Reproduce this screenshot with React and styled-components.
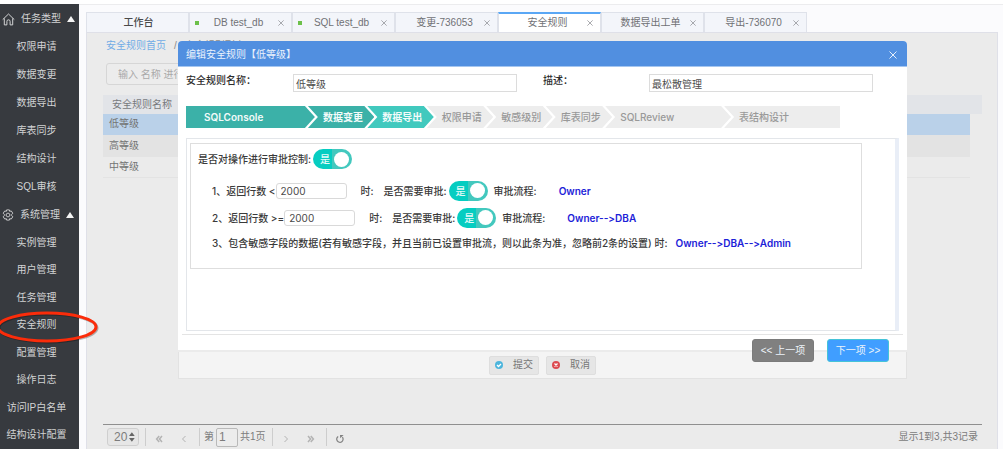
import React, { useState } from 'react';
import styled, { createGlobalStyle, css } from 'styled-components';

const GlobalStyle = createGlobalStyle`
  * {
    box-sizing: border-box;
  }

  body {
    margin: 0;
    background: #fbfbfd;
    font-family: 'Liberation Sans', 'Noto Sans CJK SC', sans-serif;
    font-size: 10px;
    line-height: 14px;
    color: #6e6e6e;
  }

  button,
  input,
  select {
    font: inherit;
    color: inherit;
  }

  ul,
  ol {
    margin: 0;
    padding: 0;
    list-style: none;
  }
`;

const Page = styled.div`
  min-height: 100vh;
  display: flex;
  border-top: 4px solid #fff;
  position: relative;
  overflow: hidden;
`;

/* ---------- sidebar ---------- */

const Sidebar = styled.nav`
  width: 79px;
  flex: none;
  display: flex;
  flex-direction: column;
  padding-top: 1px;
  background: #373a3f;
  color: #d2d3d4;
`;

const GroupTitle = styled.button`
  height: 28px;
  flex: none;
  display: flex;
  align-items: center;
  gap: 6px;
  padding: 0 0 0 2px;
  border: 0;
  background: none;
  white-space: nowrap;

  svg {
    flex: none;
  }
`;

const Menu = styled.ul`
  display: flex;
  flex-direction: column;
  flex: ${({ $fill }) => ($fill ? '1' : 'none')};
`;

const MenuItem = styled.li`
  flex: 1;
  min-height: ${({ $tall }) => ($tall ? 28 : 24)}px;
  display: flex;
  align-items: center;
  justify-content: center;
  padding-right: 6px;
  position: relative;
`;

const MenuLink = styled.a`
  color: inherit;
  text-decoration: none;
  white-space: nowrap;
`;

const Mark = styled.svg`
  position: absolute;
  left: -10px;
  top: -3px;
  width: 112px;
  height: 36px;
  z-index: 3;
  pointer-events: none;
`;

/* ---------- tabs and page ---------- */

const Main = styled.main`
  flex: 1;
  min-width: 0;
  display: flex;
  flex-direction: column;
  padding: 7px 5px 0 7px;
  border-top: 1px solid #ececee;
`;

const Tabs = styled.div`
  display: flex;
  flex: none;
`;

const Tab = styled.div`
  width: 103px;
  height: 20px;
  display: flex;
  align-items: center;
  padding: 0 7px 0 5px;
  background: #f3f5fa;
  border: 1px solid #dfe2ea;
  border-bottom: 0;

  ${({ $active }) =>
    $active &&
    css`
      background: #fff;
      border-top: 2px solid #5aa7f5;
    `}
`;

const TabDot = styled.span`
  width: 4px;
  height: 4px;
  flex: none;
  background: ${({ $on }) => ($on ? '#6cc04a' : 'transparent')};
`;

const TabName = styled.span`
  flex: 1;
  text-align: center;
  white-space: nowrap;
  color: ${({ $strong }) => ($strong ? '#4a4a4a' : '#707175')};
  font-weight: ${({ $strong }) => ($strong ? 500 : 400)};
`;

const CloseButton = styled.button`
  display: flex;
  padding: 0;
  border: 0;
  background: none;
  color: ${({ $light }) => ($light ? '#e6effb' : '#8d8f94')};
`;

const Panel = styled.section`
  flex: 1;
  display: flex;
  flex-direction: column;
  padding: 6px 15px 0 16px;
  background: #ebebeb;
  border: 1px solid #dfe0e8;
  border-bottom: 0;
`;

const Breadcrumb = styled.div`
  display: flex;
  gap: 8px;
  padding-left: 3px;
  color: #8a8a8a;

  a {
    color: #71abe6;
    text-decoration: none;
  }
`;

const Search = styled.input`
  width: 180px;
  height: 22px;
  margin: 10px 0 10px 3px;
  padding: 0 11px;
  border: 1px solid #d6d6d6;
  border-radius: 3px;
  background: #ececec;

  &::placeholder {
    color: #a9a9a9;
  }
`;

const TableWrap = styled.div`
  background: linear-gradient(#e2e4e8, #e2e4e8) no-repeat 0 0 / 100% 19px;
`;

const Table = styled.table`
  width: calc(100% - 12px);
  border-collapse: collapse;
  text-align: left;

  th {
    height: 19px;
    padding: 0 9px;
    font-weight: 400;
    color: #77797d;
  }

  td {
    height: 21px;
    padding: 0 6px;
    color: #747474;
    border-bottom: 1px solid #e3e3e3;
  }
`;

const Row = styled.tr`
  background: ${({ $tone }) => $tone};
`;

const Pager = styled.div`
  display: flex;
  align-items: center;
  height: 25px;
  margin-top: auto;
  padding: 0 4px;
  border-top: 1px solid #8f8f8f;
  color: #7c7c7c;
`;

const PageSize = styled.label`
  display: flex;
  align-items: center;
  width: 32px;
  height: 18px;
  padding: 0 3px 0 6px;
  border: 1px solid #cfcfcf;
  border-radius: 3px;
  background: #e6e6e6;
  font-size: 12px;

  select {
    width: 16px;
    padding: 0;
    border: 0;
    background: none;
    appearance: none;
  }
`;

const PagerGroup = styled.div`
  display: flex;
  align-items: center;
  gap: ${({ $gap }) => $gap}px;
  height: 18px;
  margin-left: 6px;
  padding-left: 4px;
  border-left: 1px solid #cdcdcd;
  white-space: nowrap;
`;

const PagerButton = styled.button`
  width: 18px;
  height: 18px;
  display: flex;
  align-items: flex-end;
  justify-content: center;
  padding: 0;
  border: 0;
  background: none;
  color: ${({ $dark }) => ($dark ? '#808080' : '#b3b3b3')};
`;

const PageInput = styled.input`
  width: 22px;
  height: 19px;
  padding: 0 2px;
  border: 1px solid #b9b9b9;
  border-radius: 2px;
  background: #ececec;
  font-size: 12px;
`;

const Total = styled.span`
  margin-left: auto;
`;

/* ---------- dialog ---------- */

const Overlay = styled.div`
  position: absolute;
  inset: 37px 96px auto 178px;
`;

const Dialog = styled.section`
  display: flex;
  flex-direction: column;
  border-radius: 4px 4px 3px 3px;
  background: #fff;
  color: #3a3a3a;
`;

const DialogHeader = styled.header`
  height: 26px;
  display: flex;
  align-items: center;
  justify-content: space-between;
  padding: 2px 10px 0 8px;
  border-bottom: 1px solid #a5c6f0;
  border-radius: 4px 4px 0 0;
  background: #518fe0;
  color: #eaf2fc;
`;

const Title = styled.h1`
  margin: 0;
  font-size: 10px;
  font-weight: 400;
`;

const DialogBody = styled.div`
  padding: 7px 4px 0;
  border-bottom: 2px solid #ebebeb;
`;

const Fields = styled.div`
  display: grid;
  grid-template-columns: 107px 1fr 132px 1fr;
  padding: 0 30px 0 4px;
`;

const FieldLabel = styled.label`
  font-weight: 500;
  color: #2c2c2c;
  padding-left: ${({ $inset }) => ($inset ? 26 : 0)}px;
`;

const FieldInput = styled.input`
  min-width: 0;
  height: 18px;
  padding: 0 2px;
  border: 1px solid #dcdcdc;
  background: #fff;
  color: #4c4c4c;
`;

const Steps = styled.ol`
  display: grid;
  grid-template-columns: 2fr repeat(5, 1fr) 2fr 2fr;
  margin: 14px 63px 0 4px;
  font-family: Inter, 'Noto Sans CJK SC', sans-serif;
`;

const stepColors = {
  done: '#3bb1a8',
  current: '#41c9be',
  todo: '#ededed',
};

const Step = styled.li`
  height: 22px;
  display: flex;
  align-items: center;
  margin-right: -10px;
  padding-left: 18px;
  background: ${({ $state }) => stepColors[$state]};
  color: ${({ $state }) => ($state === 'todo' ? '#999' : '#f2fbfa')};
  font-weight: ${({ $state }) => ($state === 'todo' ? 500 : 600)};
  white-space: nowrap;
  clip-path: polygon(
    3px 0,
    calc(100% - 10px) 0,
    100% 50%,
    calc(100% - 10px) 100%,
    3px 100%,
    13px 50%
  );

  &:first-child {
    clip-path: polygon(0 0, calc(100% - 10px) 0, 100% 50%, calc(100% - 10px) 100%, 0 100%);
  }

  &:last-child {
    margin-right: 0;
    clip-path: polygon(3px 0, 100% 0, 100% 100%, 3px 100%, 13px 50%);
  }
`;

const StepContent = styled.div`
  min-height: 193px;
  margin: 10px 4px 0;
  padding: 4px 33px 0 3px;
  border: 1px solid #e3e6ea;
  border-right: 4px solid #e9eef7;
`;

const RuleBox = styled.div`
  min-height: 126px;
  padding: 4px 7px 0;
  border: 1px solid #dedede;
  color: #3a3a3a;
  font-family: Inter, 'Noto Sans CJK SC', sans-serif;
  font-weight: 500;
  font-variant-ligatures: none;
  font-feature-settings: 'calt' 0;
`;

const Rule = styled.div`
  display: flex;
  align-items: center;
  height: ${({ $height }) => $height}px;
  padding-left: ${({ $nested }) => ($nested ? 14 : 0)}px;
  white-space: nowrap;
`;

const RuleList = styled.div`
  padding-top: 7px;
`;

const CountInput = styled.input`
  width: 71px;
  height: 16px;
  margin: 0 14px 0 0;
  padding: 0 4px;
  border: 1px solid #d9d9d9;
  border-radius: 3px;
  background: #fff;
  color: #4a4a4a;
  font-weight: 400;
`;

const Ask = styled.span`
  margin-left: 10px;
`;

const Toggle = styled.label`
  width: 39px;
  height: 20px;
  flex: none;
  display: flex;
  align-items: center;
  justify-content: space-between;
  margin: 0 6px 0 2px;
  padding: 0 3px 0 7px;
  border-radius: 10px;
  background: linear-gradient(90deg, #06cdc1 50%, #43c8be 50%);
  color: #e5fbf9;
  position: relative;

  input {
    position: absolute;
    inset: 0;
    margin: 0;
    opacity: 0;
  }
`;

const Knob = styled.span`
  width: 15px;
  height: 15px;
  border-radius: 50%;
  background: #fff;
`;

const Flow = styled.a`
  margin-left: ${({ $gap }) => $gap}px;
  color: #1c22d8;
  font-weight: 600;
  text-decoration: none;
`;

const StepActions = styled.div`
  display: flex;
  justify-content: flex-end;
  gap: 13px;
  height: 16px;
  margin-top: 3px;
  padding: 4px 14px 0;
  border-top: 1px solid #e4e4e4;
`;

const StepButton = styled.button`
  width: 62px;
  height: 23px;
  flex: none;
  padding: 0;
  border: 1px solid ${({ $primary }) => ($primary ? '#45c3d8' : '#7b7b7b')};
  border-radius: 3px;
  background: ${({ $primary }) => ($primary ? '#409eff' : '#808080')};
  color: #eef4fa;
  white-space: nowrap;
  position: relative;
`;

const DialogFooter = styled.footer`
  height: 27px;
  display: flex;
  align-items: center;
  justify-content: center;
  gap: 7px;
  border: 1px solid #e2e2e2;
  border-top: 0;
  background: #f4f4f4;
`;

const FooterButton = styled.button`
  width: 50px;
  height: 19px;
  display: flex;
  align-items: center;
  justify-content: space-between;
  padding: 0 5px;
  border: 1px solid #dedede;
  border-radius: 2px;
  background: #e6e6e6;
  color: #777;
`;

/* ---------- icons ---------- */

const HomeIcon = () => (
  <svg width="13" height="13" viewBox="0 0 13 13" fill="none" stroke="currentColor">
    <path d="M.7 6.6 6.5 1l5.8 5.6M2.3 5.4v6.5h2.6V8.4a1.6 1.6 0 0 1 3.2 0v3.5h2.6V5.4" />
  </svg>
);

const GearIcon = () => (
  <svg width="12" height="12" viewBox="0 0 12 12" fill="none" stroke="currentColor" strokeWidth=".9">
    <path d="M4.3 2.4 4.6.9h2.8l.3 1.5 1.5-.5 1.6 2.3L9.7 5.3v1.4l1.1 1.1-1.6 2.3-1.5-.5-.3 1.5H4.6l-.3-1.5-1.5.5-1.6-2.3 1.1-1.1V5.3L1.2 4.2l1.6-2.3z" />
    <path d="m6 4 1.8 1v2L6 8 4.2 7V5z" />
  </svg>
);

const Caret = () => (
  <svg width="8" height="6" viewBox="0 0 8 6" fill="#f4f4f4">
    <path d="M4 0l4 6H0z" />
  </svg>
);

const Cross = ({ size = 6 }) => (
  <svg width={size} height={size} viewBox="0 0 8 8" fill="none" stroke="currentColor">
    <path d="M.5.5l7 7M7.5.5l-7 7" />
  </svg>
);

const Arrows = () => (
  <svg width="6" height="10" viewBox="0 0 6 10" fill="#666">
    <path d="M3 0l3 4H0zM3 10l3-4H0z" />
  </svg>
);

const Chevron = ({ double, flip }) => (
  <svg
    width="8"
    height="14"
    viewBox="0 0 8 14"
    fill="none"
    stroke="currentColor"
    strokeWidth={double ? 1.5 : 1}
    transform={flip ? 'scale(-1 1)' : undefined}
  >
    <path d={double ? 'M4.2 4 1.6 7l2.6 3M7 4 4.4 7 7 10' : 'M5.5 4l-3 3 3 3'} />
  </svg>
);

const Refresh = () => (
  <svg width="10" height="14" viewBox="0 0 10 14" fill="none" stroke="currentColor">
    <path strokeWidth="1.2" d="M3.2 4.4A3.2 3.2 0 1 0 7.4 5.1" />
    <path fill="currentColor" stroke="none" d="M5 3h3.6L5.2 6.2z" />
  </svg>
);

const Badge = ({ color, path }) => (
  <svg width="8" height="8" viewBox="0 0 8 8" fill="none">
    <circle cx="4" cy="4" r="4" fill={color} />
    <path d={path} stroke="#fff" strokeWidth="1.3" />
  </svg>
);

/* ---------- data ---------- */

const taskMenu = ['权限申请', '数据变更', '数据导出', '库表同步', '结构设计', 'SQL审核'];

const systemMenu = [
  '实例管理',
  '用户管理',
  '任务管理',
  '安全规则',
  '配置管理',
  '操作日志',
  '访问IP白名单',
  '结构设计配置',
];

const tabs = [
  { name: '工作台', home: true },
  { name: 'DB test_db', dot: true },
  { name: 'SQL test_db', dot: true },
  { name: '变更-736053' },
  { name: '安全规则', active: true },
  { name: '数据导出工单' },
  { name: '导出-736070' },
];

const levels = [
  { name: '低等级', tone: '#bad1e9' },
  { name: '高等级', tone: '#e3e3e3' },
  { name: '中等级', tone: '#ebebeb' },
];

const steps = [
  ['SQLConsole', 'done'],
  ['数据变更', 'done'],
  ['数据导出', 'current'],
  ['权限申请', 'todo'],
  ['敏感级别', 'todo'],
  ['库表同步', 'todo'],
  ['SQLReview', 'todo'],
  ['表结构设计', 'todo'],
];

const rules = [
  { label: '1、返回行数 <', flow: 'Owner' },
  { label: '2、返回行数 >=', flow: 'Owner-->DBA' },
];

const Switch = ({ label }) => {
  const [on, setOn] = useState(true);

  return (
    <Toggle>
      <input
        type="checkbox"
        aria-label={label}
        checked={on}
        onChange={() => setOn(!on)}
      />
      {on ? '是' : '否'}
      <Knob />
    </Toggle>
  );
};

const SideMenu = () => (
  <Sidebar>
    <GroupTitle>
      <HomeIcon />
      任务类型
      <Caret />
    </GroupTitle>
    <Menu>
      {taskMenu.map((item) => (
        <MenuItem key={item} $tall>
          <MenuLink href="#">{item}</MenuLink>
        </MenuItem>
      ))}
    </Menu>
    <GroupTitle>
      <GearIcon />
      系统管理
      <Caret />
    </GroupTitle>
    <Menu $fill>
      {systemMenu.map((item) => (
        <MenuItem key={item}>
          <MenuLink href="#">{item}</MenuLink>
          {item === '安全规则' && (
            <Mark viewBox="0 0 112 36" fill="none">
              <ellipse cx="58" cy="19" rx="49" ry="14" stroke="#0004" strokeWidth="3" />
              <ellipse cx="57" cy="18" rx="49" ry="14" stroke="#fb2c0a" strokeWidth="3" />
            </Mark>
          )}
        </MenuItem>
      ))}
    </Menu>
  </Sidebar>
);

const RuleDialog = () => (
  <Overlay>
    <Dialog role="dialog" aria-label="编辑安全规则">
      <DialogHeader>
        <Title>编辑安全规则【低等级】</Title>
        <CloseButton $light aria-label="关闭">
          <Cross size={8} />
        </CloseButton>
      </DialogHeader>
      <DialogBody>
        <Fields>
          <FieldLabel htmlFor="rule-name">安全规则名称：</FieldLabel>
          <FieldInput id="rule-name" defaultValue="低等级" />
          <FieldLabel $inset htmlFor="rule-desc">
            描述：
          </FieldLabel>
          <FieldInput id="rule-desc" defaultValue="最松散管理" />
        </Fields>
        <Steps>
          {steps.map(([name, state]) => (
            <Step key={name} $state={state}>
              {name}
            </Step>
          ))}
        </Steps>
        <StepContent>
          <RuleBox>
            <Rule $height={22}>
              是否对操作进行审批控制:
              <Switch label="是否对操作进行审批控制" />
            </Rule>
            <RuleList>
              {rules.map(({ label, flow }) => (
                <Rule key={label} $height={27} $nested>
                  <label htmlFor={flow}>{label}</label>
                  <CountInput id={flow} defaultValue="2000" />
                  时:
                  <Ask>是否需要审批:</Ask>
                  <Switch label="是否需要审批" />
                  审批流程:
                  <Flow $gap={22} href="#">
                    {flow}
                  </Flow>
                </Rule>
              ))}
              <Rule $height={24} $nested>
                3、包含敏感字段的数据(若有敏感字段，并且当前已设置审批流，则以此条为准，忽略前2条的设置) 时:
                <Flow $gap={8} href="#">
                  {'Owner-->DBA-->Admin'}
                </Flow>
              </Rule>
            </RuleList>
          </RuleBox>
        </StepContent>
        <StepActions>
          <StepButton>{'<< 上一项'}</StepButton>
          <StepButton $primary>{'下一项 >>'}</StepButton>
        </StepActions>
      </DialogBody>
      <DialogFooter>
        <FooterButton>
          <Badge color="#4db5dc" path="M2 4l1.5 1.5L6 3" />
          提交
        </FooterButton>
        <FooterButton>
          <Badge color="#dc4a50" path="M2.5 2.5l3 3M5.5 2.5l-3 3" />
          取消
        </FooterButton>
      </DialogFooter>
    </Dialog>
  </Overlay>
);

const App = () => (
  <>
    <GlobalStyle />
    <Page>
      <SideMenu />
      <Main>
        <Tabs>
          {tabs.map(({ name, dot, home, active }) => (
            <Tab key={name} $active={active}>
              <TabDot $on={dot} />
              <TabName $strong={home}>{name}</TabName>
              {!home && (
                <CloseButton aria-label="关闭">
                  <Cross />
                </CloseButton>
              )}
            </Tab>
          ))}
        </Tabs>
        <Panel>
          <Breadcrumb>
            <a href="#">安全规则首页</a>
            <span>/</span>
            <span>安全规则列表</span>
          </Breadcrumb>
          <Search aria-label="搜索" placeholder="输入 名称 进行搜索" />
          <TableWrap>
            <Table>
              <thead>
                <tr>
                  <th>安全规则名称</th>
                </tr>
              </thead>
              <tbody>
                {levels.map(({ name, tone }) => (
                  <Row key={name} $tone={tone}>
                    <td>{name}</td>
                  </Row>
                ))}
              </tbody>
            </Table>
          </TableWrap>
          <Pager>
            <PageSize>
              <select aria-label="每页条数" defaultValue="20">
                <option>20</option>
                <option>50</option>
              </select>
              <Arrows />
            </PageSize>
            <PagerGroup $gap={7}>
              <PagerButton aria-label="首页">
                <Chevron double />
              </PagerButton>
              <PagerButton aria-label="上一页">
                <Chevron />
              </PagerButton>
            </PagerGroup>
            <PagerGroup $gap={2}>
              <label htmlFor="page">第</label>
              <PageInput id="page" defaultValue="1" />
              共1页
            </PagerGroup>
            <PagerGroup $gap={7}>
              <PagerButton aria-label="下一页">
                <Chevron flip />
              </PagerButton>
              <PagerButton aria-label="末页">
                <Chevron double flip />
              </PagerButton>
            </PagerGroup>
            <PagerGroup $gap={0}>
              <PagerButton $dark aria-label="刷新">
                <Refresh />
              </PagerButton>
            </PagerGroup>
            <Total>显示1到3,共3记录</Total>
          </Pager>
        </Panel>
      </Main>
      <RuleDialog />
    </Page>
  </>
);

export default App;
